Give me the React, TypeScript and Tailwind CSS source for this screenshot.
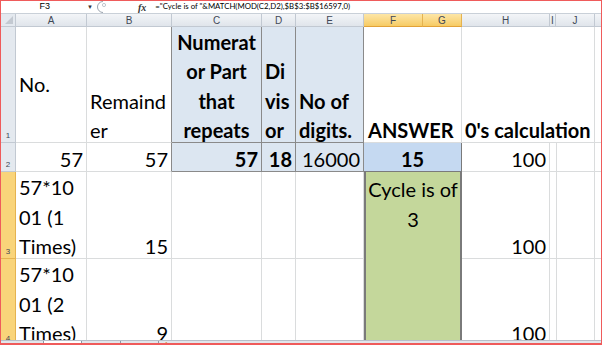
import React from "react";
import { twMerge } from "tailwind-merge";

// Excel 2010 style sheet snapshot

type CellProps = { className?: string; children?: React.ReactNode; drop?: boolean };

function Cell({ className = "", children, drop = true }: CellProps) {
  return (
    <div
      className={twMerge(
        "border-r border-b border-[#dadcdd] overflow-hidden flex flex-col justify-end px-[3px] text-[20px] leading-[29.5px] text-black",
        className
      )}
    >
      {children !== undefined && (
        <div className={twMerge("flex flex-col items-[inherit]", drop && "-mb-[3.5px]")}>{children}</div>
      )}
    </div>
  );
}

function ColHead({ label, sel = false }: { label: string; sel?: boolean }) {
  return (
    <div
      className={twMerge(
        "flex items-center justify-center border-r border-b border-[#c2c9d2] bg-gradient-to-b from-[#f3f5f8] to-[#e0e5eb] text-[10px] text-[#3f4856] font-['Liberation_Sans',sans-serif]",
        sel && "from-[#fde6a6] to-[#f7cb63] border-[#e5b350] border-b-[#e2a238]"
      )}
    >
      {label}
    </div>
  );
}

function RowHead({ label, sel = false }: { label: string; sel?: boolean }) {
  return (
    <div
      className={twMerge(
        "flex items-end justify-center pb-[1px] border-r border-b border-[#c2c9d2] bg-[#e4e9ef] text-[8px] leading-[10px] text-[#3f4856] font-['Liberation_Sans',sans-serif]",
        sel && "bg-[#f9d47a] border-[#e5b350]"
      )}
    >
      {label}
    </div>
  );
}

export default function App() {
  return (
    <div className="w-[602px] h-[345px] border border-b-2 border-[#ef5b5b] bg-white overflow-hidden flex flex-col font-['Lato','Carlito',sans-serif]">
      {/* formula bar */}
      <div className="h-[12px] flex items-center bg-white font-['Liberation_Sans',sans-serif] text-[9px] text-black whitespace-nowrap">
        <div className="w-[95px] h-[12px] shrink-0 flex items-center">
          <span className="ml-auto mr-[37px]">F3</span>
          <span className="mr-[3px] text-[6px] text-[#333]">▼</span>
        </div>
        <svg width="12" height="12" viewBox="0 0 12 12" className="ml-[1px] shrink-0">
          <path d="M6 0.5 A5.5 5.5 0 0 0 6 11.5" fill="none" stroke="#9aa3ae" strokeWidth="1" />
          <circle cx="7" cy="4" r="1.6" fill="none" stroke="#b0b8c2" strokeWidth="0.8" />
        </svg>
        <span className="ml-[29px] italic font-['Liberation_Serif',serif] text-[10px] font-bold text-[#333]">fx</span>
        <span className="ml-[9px] font-['Lato',sans-serif] text-[7.8px]">
          ="Cycle is of "&amp;MATCH(MOD(C2,D2),$B$3:$B$16597,0)
        </span>
      </div>
      <div className="h-[1px] bg-[#c9d0d8]" />

      {/* grid */}
      <div className="h-[326px] overflow-hidden">
        <div className="grid grid-cols-[15px_71px_85px_90px_34px_68px_59px_39px_88px_6px_39px_1fr] grid-rows-[13px_116px_29px_87px_87px]">
          {/* column headers */}
          <div className="border-r border-b border-[#c2c9d2] bg-[#e4e9ef] flex items-end justify-end p-[2px]">
            <svg width="8" height="8" viewBox="0 0 8 8">
              <path d="M8 0 L8 8 L0 8 Z" fill="#c3c9d1" />
            </svg>
          </div>
          <ColHead label="A" />
          <ColHead label="B" />
          <ColHead label="C" />
          <ColHead label="D" />
          <ColHead label="E" />
          <ColHead label="F" sel />
          <ColHead label="G" sel />
          <ColHead label="H" />
          <ColHead label="I" />
          <ColHead label="J" />
          <ColHead label="" />

          {/* row 1 */}
          <RowHead label="1" />
          <Cell className="justify-center" drop={false}>No.</Cell>
          <Cell className="border-r-[#8a8a8a]">
            <div>Remaind</div>
            <div>er</div>
          </Cell>
          <Cell className="bg-[#dce6f1] border-[#8a8a8a] font-bold items-center text-center">
            <div>Numerat</div>
            <div>or Part</div>
            <div>that</div>
            <div>repeats</div>
          </Cell>
          <Cell className="bg-[#dce6f1] border-[#8a8a8a] font-bold">
            <div>Di</div>
            <div>vis</div>
            <div>or</div>
          </Cell>
          <Cell className="bg-[#dce6f1] border-[#8a8a8a] font-bold">
            <div>No of</div>
            <div>digits.</div>
          </Cell>
          <Cell className="col-span-2 font-bold px-[4px]">ANSWER</Cell>
          <Cell className="col-span-3 font-bold whitespace-nowrap">0's calculation</Cell>
          <Cell />

          {/* row 2 */}
          <RowHead label="2" />
          <Cell className="items-end">57</Cell>
          <Cell className="items-end border-r-[#8a8a8a]">57</Cell>
          <Cell className="items-end bg-[#dce6f1] border-[#8a8a8a] font-bold">57</Cell>
          <Cell className="items-end bg-[#dce6f1] border-[#8a8a8a] font-bold">18</Cell>
          <Cell className="items-end bg-[#dce6f1] border-[#8a8a8a]">16000</Cell>
          <Cell className="col-span-2 items-center bg-[#c5d9f1] border-[#7a7a7a] font-bold">15</Cell>
          <Cell className="items-end">100</Cell>
          <Cell />
          <Cell />
          <Cell />

          {/* row 3 */}
          <RowHead label="3" sel />
          <Cell>
            <div>57*10</div>
            <div>01 (1</div>
            <div>Times)</div>
          </Cell>
          <Cell className="items-end">15</Cell>
          <Cell />
          <Cell />
          <Cell />
          <Cell
            drop={false}
            className="col-span-2 row-span-2 justify-start items-center text-center whitespace-nowrap px-0 bg-[#c4d79b] border-2 border-t-0 border-[#7a7a7a] pt-[3px]"
          >
            <div>Cycle is of</div>
            <div>3</div>
          </Cell>
          <Cell className="items-end">100</Cell>
          <Cell />
          <Cell />
          <Cell />

          {/* row 4 */}
          <RowHead label="4" sel />
          <Cell>
            <div>57*10</div>
            <div>01 (2</div>
            <div>Times)</div>
          </Cell>
          <Cell className="items-end">9</Cell>
          <Cell />
          <Cell />
          <Cell />
          <Cell className="items-end">100</Cell>
          <Cell />
          <Cell />
          <Cell />
        </div>
      </div>

      {/* sheet tabs strip (mostly hidden) */}
      <div className="h-[3px] bg-[#e2e6eb] overflow-hidden flex items-start text-[8px] leading-[9px] text-[#333] font-['Liberation_Sans',sans-serif] border-t border-[#b8c0ca] whitespace-nowrap">
        <span className="ml-[2px] w-[40px]">◂ ◂ ▸ ▸</span>
        <span className="px-[6px] bg-white border-x border-[#8e99a6]">Sheet1</span>
        <span className="px-[6px] border-r border-[#8e99a6]">Sheet2</span>
        <span className="px-[6px] border-r border-[#8e99a6]">Sheet3</span>
        <span className="px-[4px] text-[#d08a20]">✱</span>
        <span className="ml-auto mr-[108px] w-[8px] border-x border-[#8e99a6]" />
      </div>
    </div>
  );
}
